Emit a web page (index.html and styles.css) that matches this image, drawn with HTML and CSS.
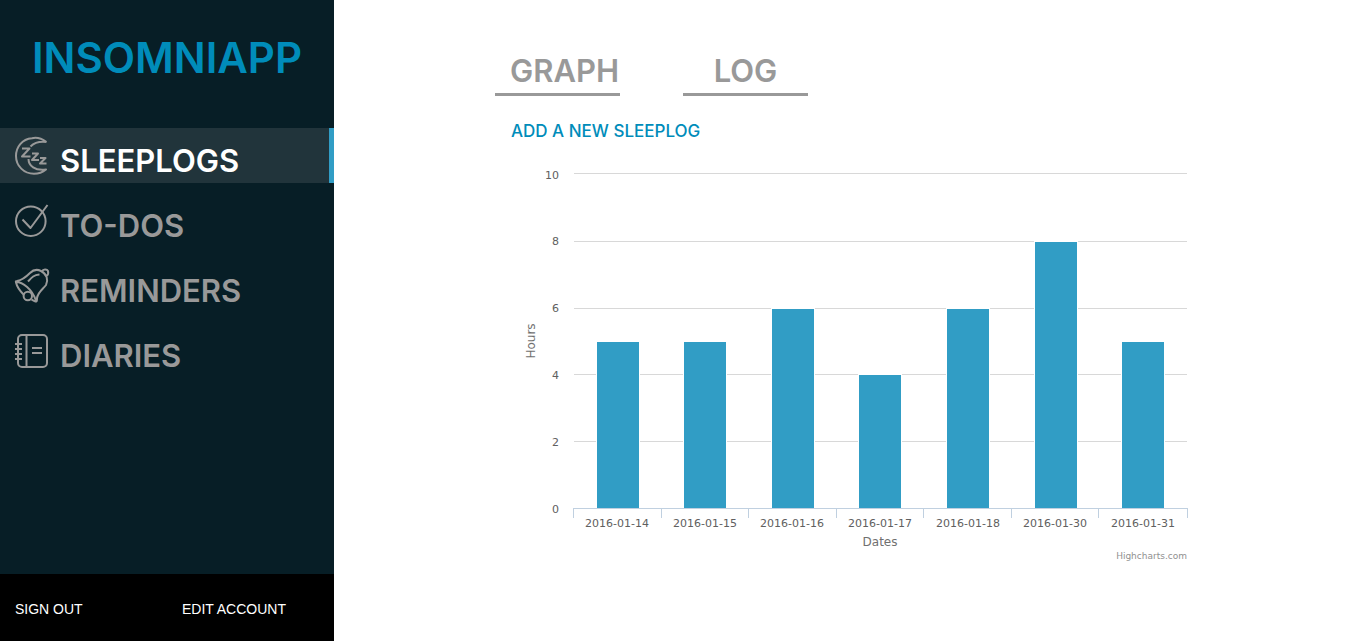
FILE: index.html
```html
<!DOCTYPE html>
<html lang="en">
<head>
<meta charset="utf-8">
<title>Insomniapp</title>
<link rel="stylesheet" href="styles.css">
</head>
<body>
<div class="app">
  <aside class="sidebar">
    <h1 class="brand">INSOMNIAPP</h1>
    <nav class="nav">
      <a class="nav-item active" href="#sleeplogs">
        <svg class="icon moon" viewBox="0 0 34 38" aria-hidden="true"><path d="M31.500 5C26 1 21 0 17 1.200C7 2 1 10 1 19C1 29 9 36.800 19 36.800C24 36.800 28 35 31 32.500C20 34 13.500 29 13.500 22M15.500 9.500C19 6 24 4 31.500 5"/><path d="M7 11.500h7.500L7 19.500h8.500M17 16.500h6L17 23h7M25 21h5.500L25 26.500h6.500"/></svg>
        <span>SLEEPLOGS</span>
      </a>
      <a class="nav-item" href="#todos">
        <svg class="icon" viewBox="0 0 34 34" aria-hidden="true"><circle cx="15.800" cy="17.200" r="14.800"/><path d="M7.500 15.500l8 8.500L32.500 1"/></svg>
        <span>TO-DOS</span>
      </a>
      <a class="nav-item" href="#reminders">
        <svg class="icon" viewBox="0 0 34 34" aria-hidden="true"><path d="M9 26C5 22 2 18 1 13.500C.5 12 1 12 2 12C8 11 12 7 15 4C18 1 22 0 26 2C32 5 33.500 11 31 16C28 20 23 23 22 29C22 31 22 33 20.500 32.500C19 32 18 31.500 16.500 30.500M1 13C8 13 17 20 21 31.500M27 2.500C28 0 32 0 33 2C33.500 4 33 6 31.500 7M13 12.500C17 8 19 6 24.500 5.500"/><circle cx="12.800" cy="27" r="4.200"/></svg>
        <span>REMINDERS</span>
      </a>
      <a class="nav-item" href="#diaries">
        <svg class="icon" viewBox="0 0 34 34" aria-hidden="true"><rect x="3" y="1" width="29" height="32" rx="4"/><path d="M11.500 1v32M17 14h10M17 19h10M0 10h7M0 15h7M0 20h7M0 25h7"/></svg>
        <span>DIARIES</span>
      </a>
    </nav>
    <footer class="account">
      <a href="#signout">SIGN OUT</a>
      <a href="#account">EDIT ACCOUNT</a>
    </footer>
  </aside>
  <main class="content">
    <nav class="tabs">
      <a class="tab" href="#graph">GRAPH</a>
      <a class="tab" href="#log">LOG</a>
    </nav>
    <a class="add" href="#new">ADD A NEW SLEEPLOG</a>
    <svg class="chart" viewBox="0 0 676 410" role="img" aria-label="Hours slept by date">
      <path class="grid" d="M63 12.5H676M63 80.5H676M63 147.5H676M63 213.5H676M63 280.5H676"/>
      <g class="bars">
        <rect x="85.5" y="180.5" width="43" height="167"/>
        <rect x="172.5" y="180.5" width="43" height="167"/>
        <rect x="260.5" y="147.5" width="43" height="200"/>
        <rect x="347.5" y="213.5" width="43" height="134"/>
        <rect x="435.5" y="147.5" width="43" height="200"/>
        <rect x="523.5" y="80.5" width="43" height="267"/>
        <rect x="610.5" y="180.5" width="43" height="167"/>
      </g>
      <path class="axis" d="M62 347.5H677M62.5 347v10M150.5 347v10M237.5 347v10M325.5 347v10M412.5 347v10M500.5 347v10M587.5 347v10M676.5 347v10"/>
      <g class="ylabels">
        <text x="48" y="18">10</text><text x="48" y="84">8</text><text x="48" y="151">6</text><text x="48" y="218">4</text><text x="48" y="285">2</text><text x="48" y="352">0</text>
      </g>
      <g class="xlabels">
        <text x="106" y="366">2016-01-14</text><text x="194" y="366">2016-01-15</text><text x="281" y="366">2016-01-16</text><text x="369" y="366">2016-01-17</text><text x="457" y="366">2016-01-18</text><text x="544" y="366">2016-01-30</text><text x="632" y="366">2016-01-31</text>
      </g>
      <text class="title" x="369" y="385">Dates</text>
      <text class="title" transform="translate(24 180) rotate(-90)">Hours</text>
      <a href="#highcharts"><text class="credit" x="676" y="398">Highcharts.com</text></a>
    </svg>
  </main>
</div>
</body>
</html>
```
FILE: styles.css
```css
* { box-sizing: border-box; }
body { margin: 0; background: #fff; font-family: Inter, "Liberation Sans", sans-serif; font-weight: 600; }
a { text-decoration: none; }
.app { display: grid; grid-template-columns: 334px 1fr; min-height: 100vh; }
.sidebar { display: flex; flex-direction: column; background: #071e26; }
.brand { margin: 0; padding: 33px 0 45px; text-align: center; font-size: 42px; line-height: 50px; font-weight: 600; color: #008cba; }
.nav { display: flex; flex-direction: column; gap: 10px; }
.nav-item { display: flex; align-items: center; gap: 11px; height: 55px; padding-left: 15px; font-size: 31px; line-height: 40px; color: #999; }
.nav-item span { padding-top: 10px; }
.nav-item.active { color: #fff; background: #21343b; border-right: 5px solid #319dc5; }
.icon { width: 34px; height: 34px; fill: none; stroke: #999; stroke-width: 2; stroke-linejoin: round; overflow: visible; }
.moon { height: 38px; }
.account { display: grid; grid-template-columns: 1fr 1fr; margin-top: auto; padding: 25px 0 22px; background: #000; font: 14px/20px "Liberation Sans", sans-serif; }
.account a { padding-left: 15px; color: #fff; }
.content { padding: 51px 175px 0 161px; }
.tabs { display: flex; gap: 63px; }
.tab { display: flex; justify-content: center; width: 125px; height: 45px; padding: 0 15px; border-bottom: 3px solid #999; font-size: 31px; line-height: 40px; color: #999; }
.tab:first-child { justify-content: flex-start; }
.add { display: block; margin: 25px 0 0 16px; font-size: 17px; line-height: 20px; font-weight: 500; color: #008cba; }
.chart { display: block; width: calc(100% - 16px); margin: 20px 0 0 16px; overflow: visible; font-family: "DejaVu Sans", sans-serif; font-weight: 400; }
.grid { fill: none; stroke: #d8d8d8; }
.bars { fill: #319dc5; stroke: #fff; }
.axis { fill: none; stroke: #c0d0e0; }
.ylabels, .xlabels { font-size: 11px; fill: #606060; }
.ylabels { text-anchor: end; }
.xlabels, .title { text-anchor: middle; }
.title { font-size: 12px; fill: #707070; }
.credit { font-size: 9px; fill: #909090; text-anchor: end; }
```
